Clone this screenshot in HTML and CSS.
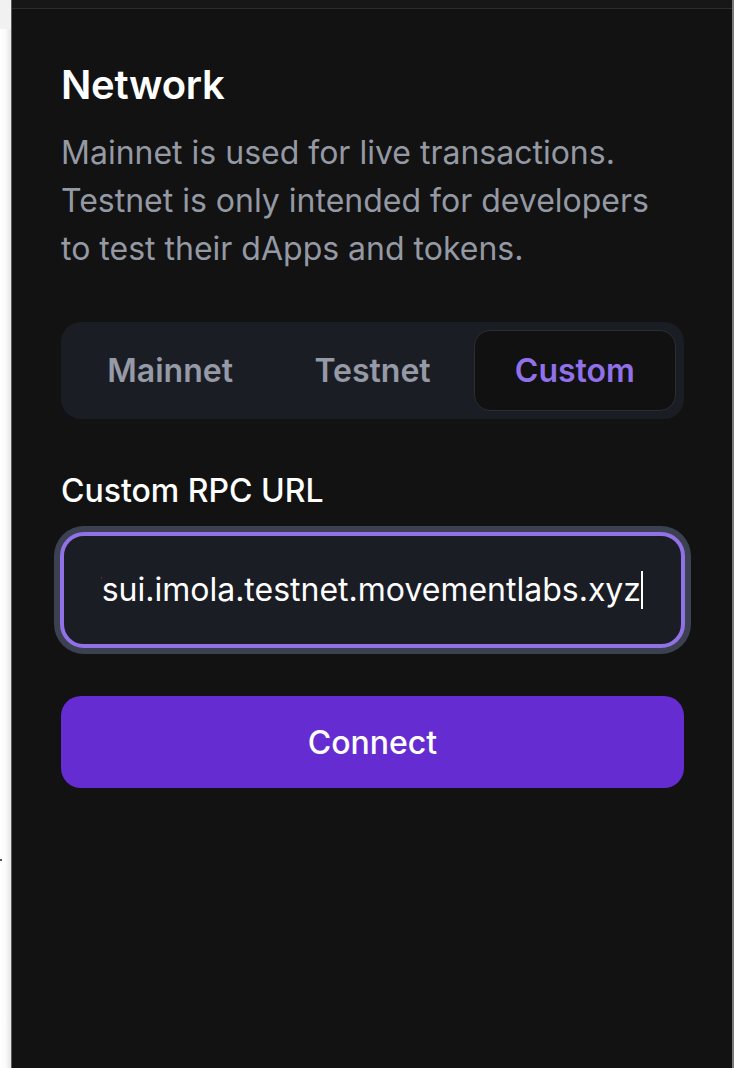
FILE: index.html
```html
<!DOCTYPE html>
<html lang="en">
<head>
<meta charset="utf-8">
<title>Network</title>
<link rel="stylesheet" href="styles.css">
</head>
<body>
<div class="side">
  <div class="side-top"></div>
  <div class="side-rest"></div>
  <span class="side-dot"></span>
</div>
<main class="panel">
  <div class="topbar"></div>
  <section class="content">
    <h1 class="title">Network</h1>
    <p class="desc">Mainnet is used for live transactions. Testnet is only intended for developers to test their dApps and tokens.</p>
    <div class="segmented">
      <button class="seg">Mainnet</button>
      <button class="seg">Testnet</button>
      <button class="seg seg-active">Custom</button>
    </div>
    <label class="label">Custom RPC URL</label>
    <div class="input">
      <div class="input-scroll">
        <span class="input-value">https://sui.imola.testnet.movementlabs.xyz</span><span class="caret"></span>
      </div>
    </div>
    <button class="connect">Connect</button>
  </section>
</main>
</body>
</html>
```
FILE: styles.css
```css
* { box-sizing: border-box; }

html, body {
  margin: 0;
  padding: 0;
  height: 1068px;
  overflow: hidden;
}

body {
  display: flex;
  background: #ffffff;
  font-family: Inter, "Noto Sans", "Liberation Sans", sans-serif;
  position: relative;
}

.side {
  width: 11px;
  display: flex;
  flex-direction: column;
  flex: none;
}

.side-top {
  height: 29px;
  background: #f1f1f1;
}

.side-rest {
  flex: 1;
  background: linear-gradient(to right, #ffffff 0%, #fbfbfb 50%, #e4e4e4 100%);
}

.side-dot {
  position: absolute;
  left: 0;
  top: 859px;
  width: 2px;
  height: 2px;
  background: #555;
}

.panel {
  flex: 1;
  min-width: 0;
  background: #121212;
  border-left: 1px solid #5a5a5a;
  border-right: 2px solid #7a7a7a;
  display: flex;
  flex-direction: column;
}

.topbar {
  height: 9px;
  background: #171717;
  border-bottom: 1px solid #2c2c2c;
}

.content {
  min-width: 0;
  padding: 48px 48px 0 49px;
  display: flex;
  flex-direction: column;
}

.title {
  margin: 0;
  font-size: 40px;
  line-height: 56px;
  font-weight: 600;
  letter-spacing: -0.3px;
  color: #ffffff;
}

.desc {
  margin: 16px 0 0;
  font-size: 32px;
  line-height: 48px;
  font-weight: 400;
  color: #9499a4;
}

.segmented {
  margin-top: 49px;
  display: grid;
  grid-template-columns: 1fr 1fr 1fr;
  padding: 8px;
  background: #1b1d25;
  border-radius: 20px;
}

.seg {
  min-width: 0;
  height: 81px;
  border: 1px solid transparent;
  border-radius: 16px;
  background: transparent;
  font-family: inherit;
  font-size: 32px;
  font-weight: 600;
  color: #959aa6;
  padding: 0;
}

.seg-active {
  background: #111111;
  border-color: #2c2c31;
  color: #9171ea;
}

.label {
  margin-top: 48px;
  font-size: 32px;
  line-height: 48px;
  font-weight: 500;
  color: #ffffff;
}

.input {
  margin: 17px -1px 0 -1px;
  height: 116px;
  min-width: 0;
  border: 4px solid #9171e6;
  border-radius: 24px;
  background: #1b1d25;
  box-shadow: 0 0 0 6px #3b4150;
  display: flex;
  align-items: center;
  padding: 0 38px 0 37px;
}

.input-scroll {
  flex: 1;
  min-width: 0;
  overflow: hidden;
  display: flex;
  justify-content: flex-end;
  align-items: center;
  white-space: nowrap;
}

.input-value {
  font-size: 32px;
  line-height: 48px;
  color: #ffffff;
  flex: none;
}

.caret {
  flex: none;
  width: 2px;
  height: 38px;
  background: #ffffff;
}

.connect {
  margin-top: 48px;
  height: 92px;
  border: none;
  border-radius: 20px;
  background: #652dd1;
  color: #ffffff;
  font-family: inherit;
  font-size: 32px;
  font-weight: 500;
}
```
